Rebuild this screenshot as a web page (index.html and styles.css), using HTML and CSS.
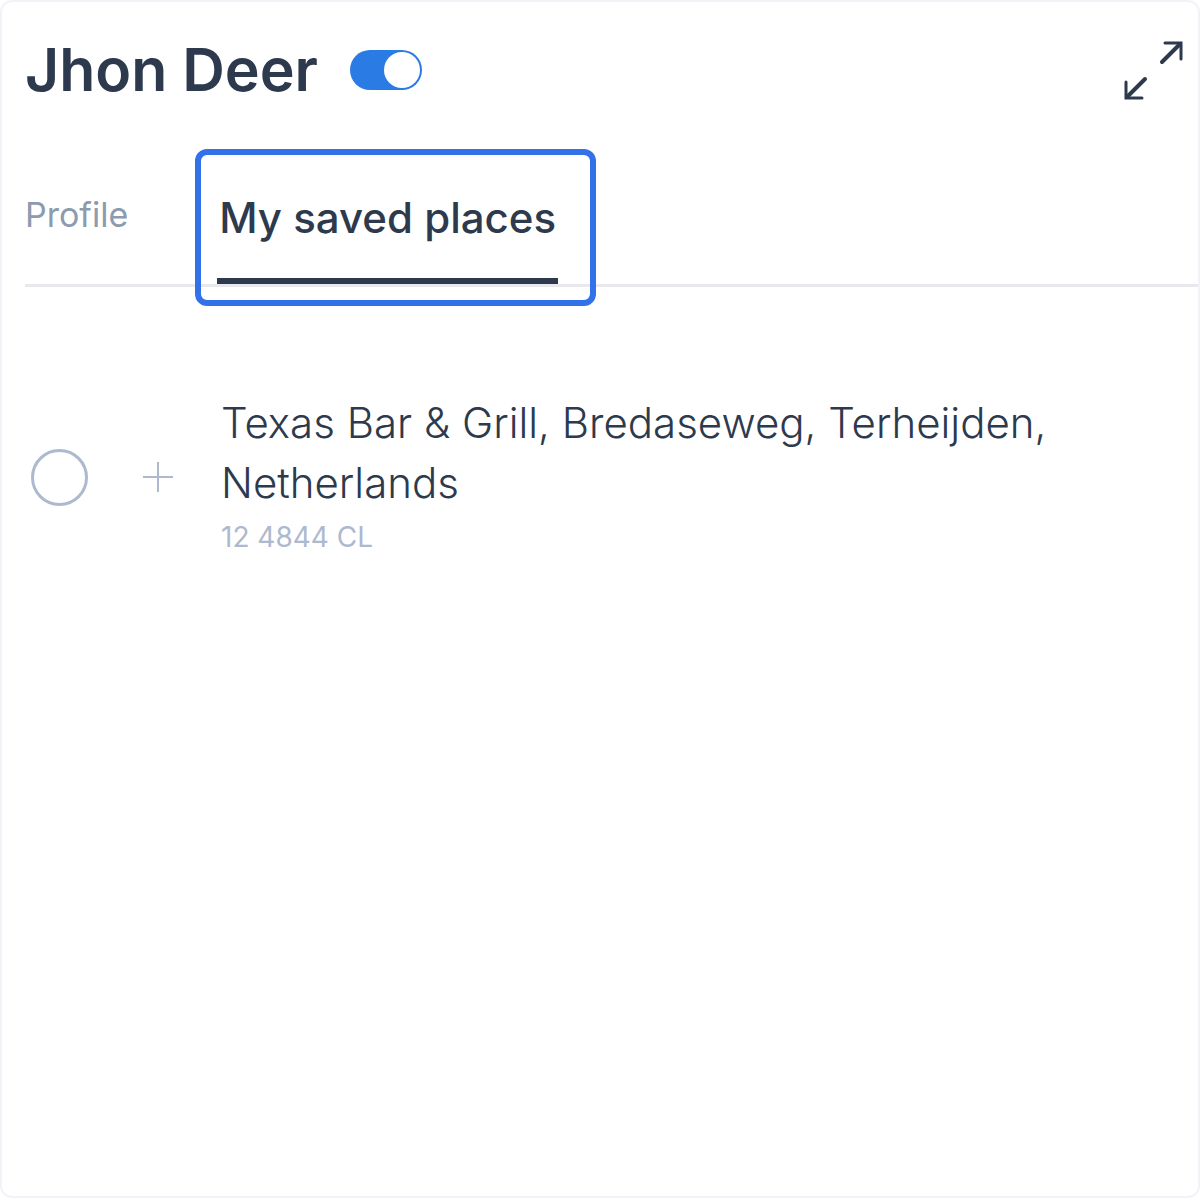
FILE: index.html
```html
<!DOCTYPE html>
<html lang="en">
<head>
    <meta charset="UTF-8">
    <meta name="viewport" content="width=device-width, initial-scale=1.0">
    <title>My saved places</title>
    <link rel="stylesheet" href="styles.css">
</head>
<body>

<main class="card">
    <header class="header">
        <h1>Jhon Deer</h1>
        <input type="checkbox" role="switch" class="switch" aria-label="Profile active" checked>
        <button class="expand-btn" type="button" aria-label="Expand">
            <svg width="64" height="64" viewBox="0 0 64 64" fill="none" stroke="currentColor" stroke-width="3" stroke-linecap="round" stroke-linejoin="miter">
                <path d="M45 5H61V21"/>
                <path d="M6 44V60H22"/>
                <path d="M60 6L42 24M7 59L25 41" stroke-width="4"/>
            </svg>
        </button>
    </header>

    <nav class="tabs" role="tablist">
        <button class="tab" type="button" role="tab" aria-selected="false">Profile</button>
        <button class="tab active" type="button" role="tab" aria-selected="true">My saved places</button>
    </nav>

    <ul class="places">
        <li class="place">
            <input type="radio" name="place" id="place-1" class="place-radio">
            <button class="add-btn" type="button" aria-label="Add place">
                <svg width="32" height="32" viewBox="0 0 32 32" fill="none" stroke="currentColor" stroke-width="2">
                    <path d="M16 1V31M1 16H31"/>
                </svg>
            </button>
            <label for="place-1" class="place-info">
                <span class="place-name">Texas Bar &amp; Grill, Bredaseweg, Terheijden, Netherlands</span>
                <span class="place-code">12 4844 CL</span>
            </label>
        </li>
    </ul>
</main>

</body>
</html>
```

FILE: styles.css
```css
* {
    box-sizing: border-box;
}
body {
    margin: 0;
    background-color: #fff;
    color: #2d3a4d;
    font-family: Inter, sans-serif;
}
button {
    padding: 0;
    border: none;
    background: none;
    color: inherit;
    font-family: inherit;
    cursor: pointer;
}
svg {
    display: block;
}
.card {
    min-height: 100vh;
    padding: 34px 0 36px 23px;
    border: 2px solid #f2f2f8;
    border-radius: 12px;
}
.header {
    display: flex;
    align-items: center;
    padding-right: 14px;
}
h1 {
    margin: 0 32px 0 0;
    font-size: 59px;
    line-height: 68px;
    font-weight: 600;
}
.switch {
    appearance: none;
    display: flex;
    justify-content: flex-end;
    width: 72px;
    height: 40px;
    margin: 0;
    padding: 2px;
    border-radius: 20px;
    background-color: #2b7be4;
    cursor: pointer;
}
.switch::before {
    content: "";
    width: 36px;
    height: 36px;
    border-radius: 50%;
    background-color: #fff;
}
.switch:not(:checked) {
    justify-content: flex-start;
    background-color: #adb9ce;
}
.expand-btn {
    margin-left: auto;
}
.tabs {
    display: flex;
    align-items: stretch;
    gap: 89px;
    height: 138px;
    margin-top: 45px;
    border-bottom: 3px solid #e7e9ed;
}
.tab {
    padding-bottom: 4px;
    color: #8c9bae;
    font-size: 34px;
    line-height: 40px;
}
.tab.active {
    position: relative;
    padding: 8px 2px 0;
    border-bottom: 6px solid #2d3a4d;
    color: #2d3a4d;
    font-size: 42px;
    font-weight: 500;
}
/* focus frame around the current tab */
.tab.active::after {
    content: "";
    position: absolute;
    inset: 0 -38px -28px -22px;
    border: 6px solid #3371eb;
    border-radius: 12px;
}
.places {
    margin: 0;
    padding: 106px 120px 0 6px;
    list-style: none;
}
.place {
    display: flex;
    align-items: center;
}
.place-radio {
    appearance: none;
    flex: none;
    width: 57px;
    height: 57px;
    margin: 0 54px 0 0;
    border: 3px solid #adb9ce;
    border-radius: 50%;
}
.place-radio:checked {
    border-width: 16px;
}
.add-btn {
    flex: none;
    margin-right: 47px;
    color: #adb9ce;
}
.place-info {
    display: flex;
    flex-direction: column;
}
.place-name {
    font-size: 42px;
    line-height: 60px;
    font-weight: 350;
}
.place-code {
    color: #adb9ce;
    font-size: 28px;
    line-height: 48px;
}
```
